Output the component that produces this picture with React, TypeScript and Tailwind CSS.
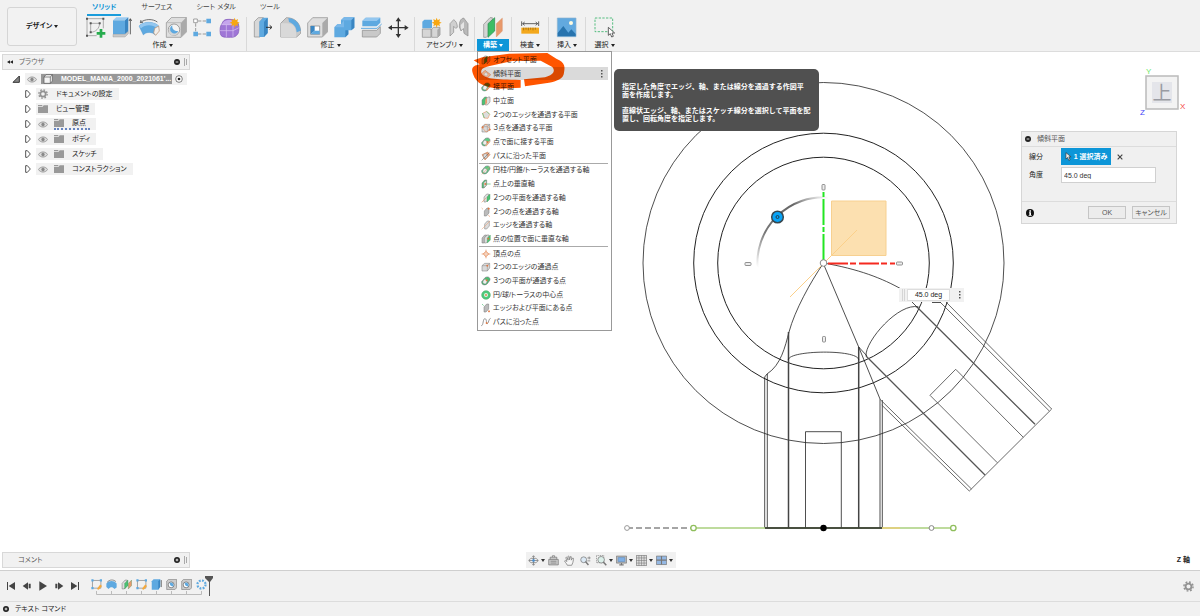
import { ReactNode, useState } from "react";
import clsx from "clsx";

const BLUE = "#5ea9e0";
const GREY = "#c9c9c9";
const EDGE = "#8a8a8a";
const GREEN = "#4cc274";
const ORANGE = "#e8996b";

function Big({ children }: { children: ReactNode }) {
    return (
        <svg viewBox="0 0 66 66" className="w-[22px] h-[22px] shrink-0" fill="none" aria-hidden="true">
            {children}
        </svg>
    );
}

function Star({ x, y }: { x: number; y: number }) {
    return (
        <path
            transform={`translate(${x} ${y})`}
            d="M0-15 3-7 10-11 8-3 15 0 8 3 10 11 3 7 0 15-3 7-10 11-8 3-15 0-8-3-10-11-3-7Z"
            fill="#f7a711"
        />
    );
}

const createIcons = [
    <Big key="sketch">
        <path d="M9 5H58V34M9 5V56H38" stroke="#888" strokeWidth="2" />
        <path d="M20 46V19H47C46 34 36 45 20 46Z" stroke="#888" strokeWidth="2" />
        <path d="M6 2h6v6H6zM55 2h6v6h-6zM6 53h6v6H6zM17 16h6v6h-6zM44 16h6v6h-6zM17 43h6v6h-6z" fill="#555" />
        <path d="M47 36h8v9h9v8h-9v9h-8v-9h-9v-8h9z" fill="#27ac4e" />
    </Big>,
    <Big key="extrude">
        <path d="M6 10 16 1H52L42 10Z" fill="#9ccbf0" />
        <path d="M6 10H42V52H6Z" fill={BLUE} />
        <path d="M42 10 52 1V43L42 52Z" fill="#3a86c2" />
        <path d="M6 52H42L52 43V50L42 60H6Z" fill={GREY} stroke={EDGE} />
        <path d="M58 52V6M54 12l4-7 4 7" stroke="#444" strokeWidth="2.5" />
    </Big>,
    <Big key="revolve">
        <path d="M3 27C16 12 48 12 62 27L52 54C42 44 24 44 16 54Z" fill={BLUE} stroke="#3a86c2" />
        <path d="M3 27C16 12 48 12 62 27L56 34C46 22 20 22 9 34Z" fill="#94c7ef" />
        <path d="M50 34 62 27 64 42 53 55 47 48Z" fill="#f2eee9" stroke="#b78c6d" strokeWidth="2" />
        <path d="M7 17C20 5 45 5 58 15M7 17l2-8M7 17l8-1" stroke="#555" strokeWidth="2.5" />
    </Big>,
    <Big key="hole">
        <path d="M4 17 20 1H64V45L48 61H4Z" fill="#dedede" stroke={EDGE} strokeWidth="2" />
        <path d="M48 17 64 1V45L48 61Z" fill="#aaa" />
        <path d="M4 17H48V61" stroke="#aaa" strokeWidth="2" />
        <circle cx="27" cy="38" r="17" fill="#f4f4f4" stroke="#777" strokeWidth="2" />
        <path d="M16 29A15 15 0 1 0 40 45C30 46 20 40 16 29Z" fill="#d5d5d5" />
        <path d="M22 25C20 35 28 44 40 42A13 13 0 1 1 22 25Z" fill={BLUE} />
    </Big>,
    <Big key="pattern">
        <path d="M18 12H43M11 19V43M18 51H43" stroke="#888" strokeWidth="2.5" strokeDasharray="10 4" />
        <path d="M5 6h11v11H5z" fill="#fff" stroke="#777" strokeWidth="2" />
        <path d="M43 5h14v14H43zM4 44h14v14H4zM43 44h14v14H43z" fill={BLUE} />
    </Big>,
    <Big key="form">
        <path
            d="M10 18C14 8 20 7 32 7 46 7 52 10 58 20 61 30 60 44 57 50 50 60 44 61 30 61 14 61 6 60 4 50 2 38 3 26 10 18Z"
            fill="#9f76d6"
            stroke="#7f55b8"
            strokeWidth="2"
        />
        <path d="M10 20C16 9 24 9 34 9L48 12 40 23H8Z" fill="#c5a5ec" />
        <path d="M3 41H42L60 32M22 24V61M42 23V60M7 23H42L54 12" stroke="#d9c4f3" strokeWidth="2" />
        <Star x={47} y={17} />
    </Big>,
];

const modifyIcons = [
    <Big key="press">
        <path d="M7 14 19 2H34L24 14V60H7Z" fill="#d8d8d8" stroke={EDGE} strokeWidth="2" />
        <path d="M22 14 33 2H47V48L36 60H22Z" fill={BLUE} />
        <path d="M36 14 47 2V48L36 60Z" fill="#3a86c2" />
        <path d="M42 31H59M53 25l7 6-7 6" stroke="#333" strokeWidth="3" />
    </Big>,
    <Big key="fillet">
        <path d="M5 19 22 2C48 2 64 18 65 43V49L53 60H5Z" fill={GREY} stroke={EDGE} strokeWidth="2" />
        <path d="M5 19H24C42 19 52 29 52 60H5Z" fill="#d9d9d9" />
        <path d="M28 3C54 5 64 25 65 41L53 46C52 30 45 21 30 15Z" fill={BLUE} />
    </Big>,
    <Big key="shell">
        <path d="M5 18 20 2H65V44L49 60H5Z" fill="#dedede" stroke={EDGE} strokeWidth="2" />
        <path d="M49 18 65 2V44L49 60Z" fill="#aaa" />
        <path d="M14 27H41V52H14Z" fill="#fff" stroke="#777" strokeWidth="2" />
        <path d="M14 27 26 27V41L14 52Z" fill="#3a86c2" />
        <path d="M14 52 26 41H41V52Z" fill={BLUE} />
    </Big>,
    <Big key="combine">
        <path d="M24 9 33 1H64V32L55 40H46V52L37 61H4V31L13 22H24Z" fill={BLUE} />
        <path d="M4 31 13 22H24L33 10 24 10 33 1H64L55 10H33V31Z" fill="#7ab8e9" />
        <path d="M55 10 64 1V32L55 40ZM37 40H46V52L37 61Z" fill="#3a86c2" />
    </Big>,
    <Big key="split">
        <path d="M7 12 17 2H61V17L50 28H7Z" fill={BLUE} />
        <path d="M7 12 17 2H61L50 12Z" fill="#94c7ef" />
        <path d="M3 34H51L65 21" stroke={BLUE} strokeWidth="3" />
        <path d="M7 40H50L61 29V49L50 60H7Z" fill={GREY} stroke={EDGE} strokeWidth="2" />
    </Big>,
    <Big key="move">
        <path d="M34 8V56M10 32H58" stroke="#333" strokeWidth="4" />
        <path d="M34 1 42 13H26ZM34 63 42 51H26ZM3 32 15 24V40ZM65 32 53 24V40Z" fill="#333" />
    </Big>,
];

const assemblyIcons = [
    <Big key="component">
        <path d="M7 14 13 8H36V34H7Z" fill={BLUE} />
        <path d="M7 36H33V61H7ZM35 36 41 31H60V54L53 61H35Z" fill="#d6d6d6" stroke={EDGE} strokeWidth="2" />
        <path d="M52 38 60 31V54L52 61Z" fill="#aaa" />
        <Star x={50} y={17} />
    </Big>,
    <Big key="joint">
        <path d="M9 20 20 8C27 12 31 20 31 31L26 34 20 28V46L9 57Z" fill="#d0d0d0" stroke={EDGE} strokeWidth="2" />
        <path d="M63 20 50 3C41 5 37 13 37 30L42 42 49 34 51 49 63 57Z" fill="#b9b9b9" stroke={EDGE} strokeWidth="2" />
        <path d="M41 24 51 14V33L42 38Z" fill="#e5e5e5" />
    </Big>,
];

const constructIcon = (
    <Big>
        <path d="M5 22 24 2H31V43L13 61H5Z" fill="#d5d5d5" stroke={EDGE} strokeWidth="2" />
        <path d="M18 20 38 2V42L18 61Z" fill="#3cbd65" stroke="#25894a" strokeWidth="2" />
        <path d="M43 20 61 3V42L43 60Z" fill={ORANGE} stroke="#d08053" />
    </Big>
);

const inspectIcon = (
    <Big>
        <path d="M7 32H60V50H7Z" fill="#f3a81c" />
        <path d="M14 32v8M21 32v6M28 32v8M35 32v6M42 32v8M49 32v6" stroke="#875d10" strokeWidth="2" />
        <path d="M8 13V27M59 13V27M11 20H56M17 15l-6 5 6 5M50 15l6 5-6 5" stroke="#444" strokeWidth="2.5" />
    </Big>
);

const insertIcon = (
    <Big>
        <path d="M4 3H60V59H4Z" fill="#62a9df" stroke="#8db4d0" strokeWidth="2" />
        <path d="M5 48 22 27 37 47 46 37 59 51V58H5Z" fill="#2874ae" />
        <circle cx="45" cy="18" r="6" fill="#fffbe0" />
    </Big>
);

const selectIcon = (
    <Big>
        <path d="M3 3H56V44H3Z" stroke="#38b36a" strokeWidth="2.5" strokeDasharray="7 4" />
        <path d="M43 31V55L49 50 53 60 58 58 54 48H62Z" fill="#fff" stroke="#444" strokeWidth="2.5" />
    </Big>
);

function Group({ label, icons }: { label: string; icons: ReactNode[] }) {
    return (
        <div className="flex flex-col items-center px-[5px] border-r border-[#d9d9d9]">
            <div className="flex gap-[5px]">
                {icons.map((icon, i) => (
                    <button key={i} type="button" aria-label={`${label} ${i + 1}`}>
                        {icon}
                    </button>
                ))}
            </div>
            <button type="button" className="flex items-center h-3 px-1 text-[7px] leading-3 whitespace-nowrap">
                {label}
                <Caret />
            </button>
        </div>
    );
}

function Single({ label, icon, last }: { label: string; icon: ReactNode; last?: boolean }) {
    return (
        <div className={clsx("flex flex-col items-center w-[37px]", !last && "border-r border-[#d9d9d9]")}>
            {icon}
            <button type="button" className="flex items-center h-3 text-[7px] leading-3 whitespace-nowrap">
                {label}
                <Caret />
            </button>
        </div>
    );
}

function Caret() {
    return (
        <svg viewBox="0 0 4 3" className="w-1 h-[3px] ml-[2px]" fill="currentColor" aria-hidden="true">
            <path d="M0 0H4L2 3Z" />
        </svg>
    );
}

// Small glyphs of the construct menu, all on a 30 x 30 grid
function slab(fill = "#d4d4d4", x = 0) {
    return <path d={`M${3 + x} 12 ${11 + x} 3H${17 + x}V18L${9 + x} 27H${3 + x}Z`} fill={fill} stroke="#777" strokeWidth="1.5" />;
}
function sheet(fill: string, x = 0) {
    return <path d={`M${10 + x} 12 ${19 + x} 3V18L${10 + x} 27Z`} fill={fill} stroke="#3e8d55" strokeWidth="1" />;
}
function dot(x: number, y: number) {
    return <path d={`M${x - 3} ${y}h6M${x} ${y - 3}v6`} stroke="#e5733a" strokeWidth="2.5" />;
}
const box = (
    <>
        <path d="M3 11 11 4H26V18L19 27H3Z" fill="#dadada" stroke="#777" strokeWidth="1.5" />
        <path d="M3 11H19V27M19 11 26 4" stroke="#888" strokeWidth="1.5" />
    </>
);
const ring = (fill: string) => (
    <>
        <path d="M2 17 12 5C20 0 28 4 27 12L19 23C13 29 1 28 2 17Z" fill={fill} stroke="#667" strokeWidth="1.5" />
        <ellipse cx="12" cy="17" rx="6" ry="7" transform="rotate(35 12 17)" fill="#eee" stroke="#777" />
    </>
);

type MenuItem = { name: string; icon: ReactNode };

const menu: MenuItem[][] = [
    [
        { name: "オフセット平面", icon: <>{slab()}{sheet(GREEN)}{sheet(ORANGE, 8)}</> },
        {
            name: "傾斜平面",
            icon: (
                <>
                    <path d="M1 15 12 4 29 17 18 28Z" fill="#efae87" stroke="#c77c52" strokeWidth="2" />
                    <path d="M9 16 15 9 21 17 15 22Z" fill="#ddd" stroke="#888" />
                </>
            ),
        },
        { name: "接平面", icon: <>{ring("#5ecb82")}<path d="M16 25 27 12" stroke={ORANGE} strokeWidth="4" /></> },
        { name: "中立面", icon: <>{slab(GREEN)}{slab("#ddd", 10)}<path d="M13 11 18 5V21L13 27Z" fill={ORANGE} /></> },
        {
            name: "２つのエッジを通過する平面",
            icon: (
                <>
                    <path d="M5 10 17 4 26 13 21 25 9 24Z" fill="#ddd" stroke={ORANGE} strokeWidth="2" />
                    <path d="M4 9 10 24M17 4 26 13" stroke={GREEN} strokeWidth="2" />
                </>
            ),
        },
        { name: "３点を通過する平面", icon: <>{box}<path d="M4 14 15 3 28 20 15 27Z" stroke={ORANGE} strokeWidth="2" />{dot(5, 13)}{dot(26, 20)}</> },
        { name: "点で面に接する平面", icon: <>{ring("#5ecb82")}<path d="M14 27 27 12" stroke="#eeb08c" strokeWidth="4" />{dot(19, 15)}</> },
        {
            name: "パスに沿った平面",
            icon: (
                <>
                    <path d="M3 11 20 3 27 11 12 27Z" fill="#e9a680" stroke="#bd7449" strokeWidth="1.5" />
                    <ellipse cx="13" cy="15" rx="6" ry="7" fill="#ddd" stroke="#777" />
                    <path d="M2 28 25 5" stroke="#555" strokeWidth="1.5" />
                </>
            ),
        },
    ],
    [
        { name: "円柱/円錐/トーラスを通過する軸", icon: <>{ring("#5ecb82")}<path d="M2 28 28 3" stroke={ORANGE} strokeWidth="1.5" /></> },
        { name: "点上の垂直軸", icon: <>{slab(GREEN)}<path d="M8 11 16 4V19L8 26Z" fill="#ddd" stroke="#777" /><path d="M13 15H29" stroke={GREEN} strokeWidth="2" />{dot(13, 15)}</> },
        { name: "２つの平面を通過する軸", icon: <>{slab("#ddd", 6)}{sheet(GREEN, 8)}<path d="M2 28 16 14" stroke={ORANGE} strokeWidth="2" /></> },
        { name: "２つの点を通過する軸", icon: <>{slab("#bbb", 7)}<path d="M2 3 6 7M22 25l5 4" stroke={ORANGE} strokeWidth="2" />{dot(23, 5)}</> },
        { name: "エッジを通過する軸", icon: <>{slab("#ddd", 8)}<path d="M2 28 27 3" stroke={ORANGE} strokeWidth="1.5" /></> },
        { name: "点の位置で面に垂直な軸", icon: <>{slab("#bbb")}{slab("#ddd", 7)}{sheet(GREEN, 9)}{dot(22, 14)}</> },
    ],
    [
        {
            name: "頂点の点",
            icon: (
                <>
                    <path d="M15 2V28M2 15H28" stroke={ORANGE} strokeWidth="2.5" />
                    <path d="M15 7 23 15 15 23 7 15Z" fill="#f4d3bf" stroke={ORANGE} strokeWidth="3" />
                </>
            ),
        },
        { name: "２つのエッジの通過点", icon: <>{box}{dot(19, 11)}</> },
        { name: "３つの平面が通過する点", icon: <>{ring("#4cbd70")}{dot(17, 13)}</> },
        {
            name: "円/球/トーラスの中心点",
            icon: (
                <>
                    <circle cx="15" cy="15" r="13" fill="#4fc97a" stroke="#3fa764" strokeWidth="1.5" />
                    <circle cx="15" cy="15" r="6" fill="#dff5e5" />
                    {dot(15, 15)}
                </>
            ),
        },
        { name: "エッジおよび平面にある点", icon: <>{slab("#bbb", 6)}<path d="M3 3 8 8" stroke={GREEN} strokeWidth="2" />{dot(24, 25)}</> },
        { name: "パスに沿った点", icon: <><path d="M1 26C8 26 5 4 12 5S14 22 19 20 22 5 29 4" stroke="#666" strokeWidth="2" />{dot(17, 18)}</> },
    ],
];

function ConstructMenu() {
    return (
        <div className="absolute top-full left-[2px] z-20 flex flex-col w-[135px] h-[280px] p-px bg-white border border-[#999] text-[7px] leading-3 text-[#333]">
            {menu.map((section, s) => (
                <ul key={s} style={{ flexGrow: section.length }} className={clsx("flex flex-col mr-[2px]", s > 0 && "border-t border-[#aaa]")}>
                    {section.map((item) => (
                        <li key={item.name} className="flex flex-1">
                            <button
                                type="button"
                                className={clsx(
                                    "flex flex-1 items-center gap-[2px] px-[2px] text-left whitespace-nowrap",
                                    item.name === "傾斜平面" && "bg-[#dadada]"
                                )}
                            >
                                <svg viewBox="0 0 30 30" className="w-[10px] h-[10px] shrink-0" fill="none" aria-hidden="true">
                                    {item.icon}
                                </svg>
                                {item.name}
                                {item.name === "傾斜平面" && <MoreDots />}
                            </button>
                        </li>
                    ))}
                </ul>
            ))}
        </div>
    );
}

function MoreDots() {
    return (
        <svg viewBox="0 0 4 10" className="w-1 h-[10px] ml-auto mr-[2px]" fill="#555" aria-hidden="true">
            <path d="M1 1h1.500v1.500H1zM1 4h1.500v1.500H1zM1 7h1.500v1.500H1z" />
        </svg>
    );
}

function Toolbar() {
    const tabs = ["ソリッド", "サーフェス", "シート メタル", "ツール"];
    return (
        <header className="relative z-20 flex h-[52px] bg-[#f1f1f1] border-b border-[#dcdcdc]">
            <button
                type="button"
                className="flex items-center justify-center w-[70px] h-[39px] ml-[7px] mt-[7px] border border-[#d5d5d5] rounded-[3px] bg-[#f2f2f2] text-[7px] font-bold"
            >
                デザイン
                <Caret />
            </button>
            <div className="flex flex-col ml-[2px]">
                <nav className="flex h-[17px] pl-2 gap-6 text-[7px] leading-[13px]">
                    {tabs.map((tab, i) => (
                        <a
                            key={tab}
                            href="#"
                            className={clsx(
                                "h-4 whitespace-nowrap",
                                i === 0 ? "px-[5px] -mr-1 font-bold text-[#0f94d6] border-b-2 border-[#1a9cdb]" : "text-[#444]"
                            )}
                        >
                            {tab}
                        </a>
                    ))}
                </nav>
                <div className="flex">
                    <Group label="作成" icons={createIcons} />
                    <Group label="修正" icons={modifyIcons} />
                    <Group label="アセンブリ" icons={assemblyIcons} />
                    <div className="relative flex flex-col items-center w-[37px] border-r border-[#d9d9d9]">
                        {constructIcon}
                        <button
                            type="button"
                            className="flex items-center justify-center w-8 h-3 bg-[#0d96d8] text-white text-[7px] leading-3 font-bold"
                        >
                            構築
                            <Caret />
                        </button>
                        <ConstructMenu />
                        <div
                            role="tooltip"
                            className="absolute top-[52px] left-[139px] z-20 w-[205px] px-2 pt-[14px] pb-2 rounded-[5px] bg-[#505050] text-white text-[7px] leading-2 font-bold whitespace-nowrap [font-feature-settings:normal]"
                        >
                            <p>
                                指定した角度でエッジ、軸、または線分を通過する作図平
                                <br />
                                面を作成します。
                            </p>
                            <p className="mt-2">
                                直線状エッジ、軸、またはスケッチ線分を選択して平面を配
                                <br />
                                置し、回転角度を指定します。
                            </p>
                        </div>
                        {/* Hand-drawn marker around the active item */}
                        <svg
                            viewBox="0 0 300 120"
                            className="absolute top-[35px] -left-[6px] z-30 w-[100px] h-10 mix-blend-multiply pointer-events-none"
                            fill="#ff5500"
                            aria-hidden="true"
                        >
                            <path d="M14 25 40 16 120 5 235 3 262 20C290 32 288 45 285 62 284 80 262 88 240 92L168 103 165 82 228 76C254 68 260 57 250 45L215 26 130 27 62 42C38 47 34 54 38 66 48 80 72 82 155 84V107L90 110C48 106 22 96 12 66 6 48 10 42 32 37Z" />
                        </svg>
                    </div>
                    <Single label="検査" icon={inspectIcon} />
                    <Single label="挿入" icon={insertIcon} />
                    <Single label="選択" icon={selectIcon} last />
                </div>
            </div>
        </header>
    );
}

function Eye() {
    return (
        <svg viewBox="0 0 30 20" className="w-[10px] h-[7px] shrink-0" fill="none" aria-hidden="true">
            <path d="M1 10C8 0 22 0 29 10 22 20 8 20 1 10Z" fill="#ddd" stroke="#999" strokeWidth="3" />
            <circle cx="15" cy="10" r="5" fill="#888" />
        </svg>
    );
}

function Folder() {
    return (
        <svg viewBox="0 0 30 24" className="w-[10px] h-2 shrink-0" fill="#999" aria-hidden="true">
            <path d="M0 0H13V3H0ZM0 5H14L17 1H30V24H0Z" />
        </svg>
    );
}

function Gear({ className }: { className: string }) {
    return (
        <svg viewBox="0 0 30 30" className={className} fill="none" stroke="#929292" aria-hidden="true">
            <circle cx="15" cy="15" r="8" strokeWidth="5" />
            <circle cx="15" cy="15" r="12.5" strokeWidth="4" strokeDasharray="5 4.8" />
        </svg>
    );
}

function PanelToggle({ plus }: { plus?: boolean }) {
    return (
        <svg viewBox="0 0 18 18" className="w-[6px] h-[6px] shrink-0" aria-hidden="true">
            <circle cx="9" cy="9" r="9" fill="#222" />
            <path d={plus ? "M5 9H13M9 5V13" : "M5 9H13"} stroke="#fff" strokeWidth="2.5" />
        </svg>
    );
}

function Grip() {
    return (
        <svg viewBox="0 0 3 8" className="w-[3px] h-2" fill="none" stroke="#aaa" aria-hidden="true">
            <path d="M.5 0V8M2.5 1V7" />
        </svg>
    );
}

const nodes = [
    { name: "ドキュメントの設定", eye: false, gear: true },
    { name: "ビュー管理", eye: false },
    { name: "原点", eye: true, wavy: true },
    { name: "ボディ", eye: true },
    { name: "スケッチ", eye: true },
    { name: "コンストラクション", eye: true },
];

function Browser() {
    return (
        <section className="text-[7px] leading-3">
            <div className="flex items-center h-4 px-1 border border-[#d8d8d8] bg-[#f1f1f1]">
                <svg viewBox="0 0 18 10" className="w-[6px] h-1 mr-[6px]" fill="#222" aria-hidden="true">
                    <path d="M9 0V10L0 5ZM18 0V10L9 5Z" />
                </svg>
                <h2 className="text-[#666]">ブラウザ</h2>
                <div className="flex items-center gap-1 ml-auto -mr-[2px]">
                    <PanelToggle />
                    <Grip />
                </div>
            </div>
            <div className="flex items-center h-3 mt-[3px] ml-[10px]">
                <svg viewBox="0 0 24 24" className="w-2 h-2 mr-[5px]" aria-hidden="true">
                    <path d="M22 3V22H3Z" fill="#888" stroke="#333" strokeWidth="3" />
                </svg>
                <div className="flex items-center h-3 pl-[2px] pr-1 bg-[#f1f1f1]">
                    <Eye />
                    <div className="flex items-center w-[131px] h-[10px] ml-1 pl-[2px] bg-[#989898] text-white font-bold font-['Liberation_Sans'] leading-[10px]">
                        <svg viewBox="0 0 30 30" className="w-[10px] h-[10px] mr-2" fill="#f4f4f4" stroke="#555" strokeWidth="2" aria-hidden="true">
                            <path d="M3 9 9 2H28V21L22 28H3ZM3 9H22V28M22 9 28 2" />
                        </svg>
                        MODEL_MANIA_2000_2021061'...
                    </div>
                    <svg viewBox="0 0 24 24" className="w-2 h-2 ml-[3px]" fill="none" aria-hidden="true">
                        <circle cx="12" cy="12" r="10" stroke="#444" strokeWidth="2" fill="#fff" />
                        <circle cx="12" cy="12" r="4" fill="#222" />
                    </svg>
                </div>
            </div>
            <ul className="flex flex-col gap-[3px] mt-[3px] ml-[23px]">
                {nodes.map((node) => (
                    <li key={node.name} className="flex items-center h-3">
                        <svg viewBox="0 0 18 24" className="w-[6px] h-2 mr-[5px]" fill="none" stroke="#333" strokeWidth="2.5" aria-hidden="true">
                            <path d="M2 2V22H7L16 12 7 2Z" />
                        </svg>
                        <div className="flex items-center h-3 pl-[2px] pr-[6px] bg-[#f1f1f1]">
                            {node.eye && (
                                <span className="mr-[6px]">
                                    <Eye />
                                </span>
                            )}
                            <span
                                className={clsx(
                                    "flex items-center gap-2 whitespace-nowrap",
                                    node.wavy && "pr-1 border-b-2 border-dotted border-[#6684c0] leading-[10px]"
                                )}
                            >
                                {node.gear ? <Gear className="w-[10px] h-[10px] shrink-0" /> : <Folder />}
                                {node.name}
                            </span>
                        </div>
                    </li>
                ))}
            </ul>
        </section>
    );
}

function Drawing() {
    return (
        <svg className="absolute inset-0 w-full h-full" fill="none" aria-hidden="true">
            <defs>
                <linearGradient id="arc" gradientUnits="userSpaceOnUse" x1="758" y1="268" x2="828" y2="197">
                    <stop offset="0" stopColor="#777" stopOpacity="0" />
                    <stop offset="0.3" stopColor="#777" />
                    <stop offset="0.7" stopColor="#666" />
                    <stop offset="1" stopColor="#777" stopOpacity="0" />
                </linearGradient>
            </defs>
            <g transform="translate(0 -52)">
                <g stroke="#222" strokeWidth="0.8">
                    <circle cx="823.5" cy="263" r="180.5" />
                    <circle cx="823.5" cy="263" r="129.8" strokeWidth="1" />
                    <circle cx="823.5" cy="263" r="105.8" strokeWidth="1" />
                    <path d="M823.5 263C858 269 882 278 903 290" />
                    <path d="M823.5 263C810 283 795 310 789 332 785 347 781 365 767 374L764.7 377V528M767.3 374V528" />
                    <path d="M823.5 264 858.7 347 880 399V528M882.3 400V528" />
                    <path d="M788.5 332V528M858.7 347V528" strokeWidth="1.5" stroke="#444" />
                    <path d="M788.3 360C788 350 858.7 349 858.7 360" />
                    <path d="M805.5 528V431.7H841.3V528" />
                    <path d="M858.7 347 867 356M912 302 917 307M932 302.500H941" />
                    <path d="M866 356 985 475M916.7 306.7 1035 424.3" strokeWidth="1.3" stroke="#555" />
                    <path d="M866 356C865 341 899 302 918.5 307" />
                    <path d="M940 302 1049.3 411M946 302 1051.7 409 969.3 491 881.7 405M880 399.3 971.5 489" stroke="#444" />
                    <path d="M1023.3 437.3 955.7 369.3 930 395.3 997.3 462.7" stroke="#444" />
                </g>
                <path d="M627 528H693" stroke="#888" strokeWidth="1.5" strokeDasharray="6 3" />
                <path d="M693 528H953" stroke="#a9cf7c" strokeWidth="1.5" />
                <path d="M882 528H900" stroke="#e8ce78" strokeWidth="1.5" />
                <path d="M765 528H882" stroke="#222" strokeWidth="1.6" />
                <circle cx="823.5" cy="528" r="3.2" fill="#000" />
                <g fill="#fff">
                    <circle cx="627" cy="528" r="2.4" stroke="#999" />
                    <circle cx="693.5" cy="528" r="2.7" stroke="#8fbe5c" strokeWidth="1.3" />
                    <circle cx="931.5" cy="528" r="2.4" stroke="#888" />
                    <circle cx="953.3" cy="528" r="2.7" stroke="#8fbe5c" strokeWidth="1.3" />
                </g>
                <path d="M831.5 201H886V255.500H831.500Z" fill="#fce0b0" stroke="#f7d090" />
                <path d="M857 230 790 297" stroke="#fbd08a" />
                <path d="M757.500 268A66 66 0 0 1 828 197.500" stroke="url(#arc)" strokeWidth="2" />
                <path d="M823.500 260V192" stroke="#22e622" strokeWidth="2" strokeDasharray="26 2 5 2" />
                <path d="M828 263.500H895" stroke="#f52a20" strokeWidth="2" strokeDasharray="20 2 6 3" />
                <circle cx="777.500" cy="217" r="5.800" fill="#08a4f7" stroke="#37474f" strokeWidth="1.500" />
                <circle cx="777.500" cy="217" r="1.500" stroke="#20404f" />
                <circle cx="823.500" cy="263" r="3.300" fill="#fff" stroke="#888" />
                <g fill="#eee" stroke="#777" strokeWidth="0.8">
                    <rect x="822" y="184.500" width="3" height="5.500" rx="0.8" />
                    <rect x="822.500" y="336.500" width="3" height="5.500" rx="0.8" />
                    <rect x="745" y="262.500" width="6" height="3" rx="0.8" />
                    <rect x="896.500" y="262" width="6" height="3" rx="0.8" />
                </g>
            </g>
        </svg>
    );
}

function ViewCube() {
    return (
        <svg viewBox="0 0 46 54" className="w-[46px] h-[54px] font-['Liberation_Sans',sans-serif]" role="img" aria-label="View">
            <path d="M6 10H38V43H6Z" fill="#f3f3f3" stroke="#bbb" strokeWidth="1.5" />
            <path d="M12 16H32V37H12Z" fill="#e4e5ea" />
            <text x="22" y="34" textAnchor="middle" fontSize="19" fill="#999ba3" fontFamily="Noto Sans CJK JP">上</text>
            <text x="6" y="8" fontSize="8" fill="#6be86b">Y</text>
            <text x="40" y="43" fontSize="8" fill="#f54545">X</text>
            <text x="0" y="49" fontSize="8" fill="#3f3ff8">Z</text>
        </svg>
    );
}

function PlaneDialog({ angle, setAngle }: { angle: string; setAngle: (v: string) => void }) {
    return (
        <form className="w-[156px] border border-[#d6d6d6] bg-[#f0f0f0] text-[7px] leading-3" onSubmit={(e) => e.preventDefault()}>
            <div className="flex items-center gap-[6px] h-[15px] px-[3px] border-b border-[#dcdcdc]">
                <PanelToggle />
                <h2 className="text-[#555]">傾斜平面</h2>
            </div>
            <div className="flex flex-col gap-[2px] h-[54px] pt-px pl-[7px]">
                <div className="flex items-center">
                    <span className="w-8">線分</span>
                    <button type="button" className="flex items-center justify-center gap-[2px] w-[50px] h-[17px] bg-[#0d96d8] text-white font-bold">
                        <svg viewBox="0 0 20 28" className="w-[7px] h-[9px]" fill="#eee" stroke="#333" strokeWidth="2" aria-hidden="true">
                            <path d="M2 2V22L7 17 11 26 15 24 11 15H18Z" />
                        </svg>
                        1 選択済み
                    </button>
                    <button type="button" aria-label="クリア" className="ml-[6px]">
                        <svg viewBox="0 0 18 18" className="w-[6px] h-[6px]" stroke="#444" strokeWidth="3.500" aria-hidden="true">
                            <path d="M2 2 16 16M16 2 2 16" />
                        </svg>
                    </button>
                </div>
                <div className="flex items-center">
                    <label htmlFor="angle" className="w-8">
                        角度
                    </label>
                    <input
                        id="angle"
                        value={angle}
                        onChange={(e) => setAngle(e.target.value)}
                        className="w-[95px] h-4 px-[2px] border border-[#d0d0d0] bg-white text-[#333]"
                    />
                </div>
            </div>
            <div className="flex items-center h-[22px] pl-1 pr-[6px] border-t border-[#dcdcdc] text-[#555]">
                <svg viewBox="0 0 24 24" className="w-2 h-2 mr-auto" fill="#fff" aria-hidden="true">
                    <circle cx="12" cy="12" r="12" fill="#111" />
                    <path d="M10 4h5v4h-5zM9 10h6v8h2v2H8v-2h2v-6H9z" />
                </svg>
                <button type="submit" className="w-[38px] h-[13px] border border-[#c5c5c5] bg-[#ececec]">
                    OK
                </button>
                <button type="button" className="w-[38px] h-[13px] ml-[6px] border border-[#c5c5c5] bg-[#ececec] whitespace-nowrap">
                    キャンセル
                </button>
            </div>
        </form>
    );
}

const navIcons = [
    <><path d="M15 2V28M2 15H28M11 6l4-4 4 4M11 24l4 4 4-4" /><ellipse cx="15" cy="15" rx="12" ry="6" /><circle cx="15" cy="15" r="3" fill="#4a8fd0" stroke="#4a8fd0" /></>,
    <><path d="M2 12H28V27H2ZM6 12V6H24V12" fill="#ccc" /><path d="M7 17H23M7 22H23M12 6V2H18V6" /></>,
    <path d="M9 28C7 22 1 19 2 16 4 14 7 17 8 18L5 7C7 4 9 7 11 14L11 4C13 1 15 3 15 13L18 4C21 3 20 8 20 14L24 8C28 8 25 15 24 21L21 28Z" fill="#f6f6f6" />,
    <><circle cx="10" cy="13" r="8" fill="#dbe9f5" /><path d="M15 18 23 27" strokeWidth="4" /><path d="M20 8H29M25 4V12M20 16H28" /></>,
    <><path d="M1 1H21V21H1Z" strokeDasharray="3 2" /><circle cx="14" cy="13" r="9" fill="#dbefe9" /><path d="M20 19 28 28" strokeWidth="4" /></>,
    <><path d="M1 3H29V22H1Z" fill="#bbb" /><path d="M6 7H24V18H6Z" fill="#7fb0e6" stroke="#6a94c4" /><path d="M9 27H21M15 22V27" strokeWidth="3" /></>,
    <><path d="M1 1H29V29H1Z" fill="#ddd" /><path d="M8 1V29M15 1V29M22 1V29M1 8H29M1 15H29M1 22H29" strokeWidth="1.5" /></>,
    <><path d="M1 3H29V26H1Z" fill="#94b8e4" /><path d="M15 3V26M1 14H29" strokeWidth="3" /></>,
];

function NavBar() {
    return (
        <div className="flex items-center h-4 pl-[2px] bg-[#f1f1f1] text-[#333]">
            {navIcons.map((icon, i) => {
                const caret = i === 0 || i > 3;
                return (
                    <button key={i} type="button" aria-label={`表示 ${i + 1}`} className={clsx("flex items-center", caret ? "w-5" : "w-4")}>
                        <svg viewBox="0 0 30 30" className="w-[11px] h-[11px]" fill="none" stroke="#777" strokeWidth="2" aria-hidden="true">
                            {icon}
                        </svg>
                        {caret && <Caret />}
                    </button>
                );
            })}
        </div>
    );
}

const featureSketch = (
    <>
        <path d="M4 4H27V25H4Z" stroke="#888" strokeWidth="2" />
        <path d="M1 1h6v6H1zM24 1h6v6h-6zM1 22h6v6H1z" fill={BLUE} />
        <path d="M16 27 25 15 30 19 21 29Z" fill="#f5a93b" />
    </>
);
const featureHole = (
    <>
        <path d="M2 6 7 1H29V24L24 29H2Z" fill="#ccc" stroke="#888" strokeWidth="2" />
        <circle cx="14" cy="16" r="8" fill="#fff" stroke="#666" strokeWidth="2" />
        <path d="M10 11C10 17 14 21 20 20A7 7 0 0 0 10 11Z" fill={BLUE} />
    </>
);
const features = [
    featureSketch,
    <><path d="M1 12C8 3 22 3 29 12V23L23 27C18 21 12 21 7 27L1 22Z" fill={BLUE} /><path d="M3 9C10 1 20 1 27 7" stroke="#666" strokeWidth="2" /></>,
    <>{slab("#ddd")}{sheet(GREEN)}{sheet(ORANGE, 10)}</>,
    featureSketch,
    <><path d="M2 6 7 1H25V21L20 29H2Z" fill={BLUE} /><path d="M20 6 25 1V21L20 29Z" fill="#3a86c2" /><path d="M28 22V3" stroke="#444" strokeWidth="2" /></>,
    featureHole,
    featureHole,
    <circle cx="15" cy="15" r="11" stroke={BLUE} strokeWidth="6" strokeDasharray="5 3.640" />,
];

const transport = [
    { label: "先頭へ", d: "M3 3H6V27H3ZM27 3V27L8 15Z" },
    { label: "前へ", d: "M18 4V26L2 15ZM20 8H26V22H20Z" },
    { label: "再生", d: "M4 1V29L27 15Z" },
    { label: "次へ", d: "M12 4V26L28 15ZM4 8H10V22H4Z" },
    { label: "末尾へ", d: "M3 3V27L22 15ZM24 3H27V27H24Z" },
];

function Timeline() {
    return (
        <div className="flex items-center h-[31px] px-[6px] border-t border-[#cfcfcf] bg-[#f1f1f1]">
            {transport.map((t) => (
                <button key={t.label} type="button" aria-label={t.label} className="w-[10px] mr-[6px]">
                    <svg viewBox="0 0 30 30" className="w-[10px] h-[10px]" fill="#444" aria-hidden="true">
                        <path d={t.d} />
                    </svg>
                </button>
            ))}
            <div className="flex ml-[3px] pt-[3px]">
                {features.map((f, i) => (
                    <div key={i} className="flex flex-col items-center w-[15px]">
                        <svg viewBox="0 0 30 30" className="w-[11px] h-[11px]" fill="none" aria-hidden="true">
                            {f}
                        </svg>
                        <svg viewBox="0 0 15 5" className="w-[15px] h-[5px] mt-px" stroke="#bbb" aria-hidden="true">
                            <path d={i === 0 ? "M7.500 0V3.500H15" : i === 7 ? "M7.500 0V3.500H0" : "M7.500 0V3.500M0 3.500H15"} fill="none" />
                        </svg>
                    </div>
                ))}
            </div>
            <svg viewBox="0 0 8 20" className="w-2 h-5 -ml-1" aria-hidden="true">
                <path d="M0 0H8V2L5 6V20H4V6L0 2Z" fill="#555" />
            </svg>
            <button type="button" aria-label="設定" className="ml-auto">
                <Gear className="w-[11px] h-[11px]" />
            </button>
        </div>
    );
}

export default function App() {
    const [angle, setAngle] = useState("45.0 deg");

    return (
        <div className="flex flex-col min-h-screen bg-white text-[#222] font-['Liberation_Sans','Noto_Sans_CJK_JP',sans-serif] [font-feature-settings:'palt']">
            <Toolbar />
            <main className="relative flex flex-1 justify-between pt-[2px]">
                <Drawing />
                <div className="relative flex flex-col justify-between w-[188px] ml-[2px] pb-[2px]">
                    <Browser />
                    <div className="flex items-center h-4 px-1 border border-[#d8d8d8] bg-[#f1f1f1] text-[7px] text-[#555]">
                        <h2 className="ml-[11px]">コメント</h2>
                        <div className="flex items-center gap-1 ml-auto -mr-[2px]">
                            <PanelToggle plus />
                            <Grip />
                        </div>
                    </div>
                </div>
                <div className="relative self-end mb-[2px]">
                    <NavBar />
                </div>
                <div className="relative flex flex-col items-end w-[188px] pt-3">
                    <div className="mr-[14px]">
                        <ViewCube />
                    </div>
                    <div className="mt-[11px] mr-[23px]">
                        <PlaneDialog angle={angle} setAngle={setAngle} />
                    </div>
                    <p className="mt-auto mr-[10px] mb-1 text-[7px] leading-3 font-bold">Z 軸</p>
                </div>
                <div className="absolute top-[236px] left-[899px] flex items-center w-[65px] h-[14px] bg-[#f1f1f1]">
                    <div className="w-[3px] h-3 ml-[3px] border-x border-[#d5d5d5]" />
                    <input
                        aria-label="角度"
                        value={angle}
                        onChange={(e) => setAngle(e.target.value)}
                        className="w-[43px] h-3 ml-[2px] border border-[#ddd] bg-white text-[7px] leading-3 text-center"
                    />
                    <MoreDots />
                </div>
            </main>
            <Timeline />
            <footer className="flex items-center gap-[6px] h-[15px] px-[3px] border-t border-[#dcdcdc] bg-[#f1f1f1] text-[7px] leading-3">
                <PanelToggle plus />
                テキスト コマンド
            </footer>
        </div>
    );
}
